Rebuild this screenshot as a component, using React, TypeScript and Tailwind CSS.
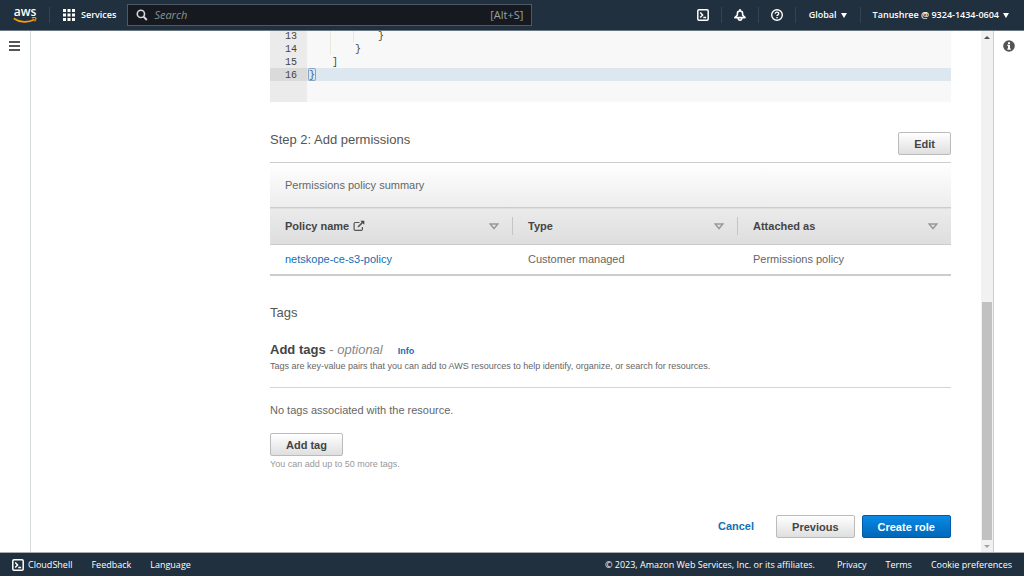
import type { ReactNode } from "react";

const codeLines = [
  { number: 13, text: "}", indent: 3, guides: 2 },
  { number: 14, text: "}", indent: 2, guides: 1 },
  { number: 15, text: "]", indent: 1, guides: 0 },
  { number: 16, text: "}", indent: 0, guides: 0, active: true },
];

const columns = [
  { title: "Policy name", width: "w-[243px]", external: true },
  { title: "Type", width: "w-[225px]" },
  { title: "Attached as", width: "w-auto" },
];

const CloudShellIcon = () => (
  <svg viewBox="0 0 12 12" className="size-3 shrink-0" fill="none" stroke="currentColor">
    <rect x="0.8" y="0.8" width="10.4" height="10.4" rx="1.2" strokeWidth="1.5" />
    <path d="M3.2 3.5 5.6 6 3.2 8.5M6.3 8.6h2.8" strokeWidth="1.5" />
  </svg>
);

const BellIcon = () => (
  <svg viewBox="0 0 12 12" className="size-3" fill="none" stroke="currentColor" strokeWidth="1.6">
    <path d="M.9 8.6h10.200L8.600 6V4.400C8.600 2.900 7.500 2 6 2s-2.600.9-2.600 2.400V6L.9 8.600Z" strokeLinejoin="round" />
    <path d="M6 0v2M4.2 9c0 1.3.8 2.2 1.800 2.200s1.800-.9 1.800-2.200" />
  </svg>
);

const HelpIcon = () => (
  <svg viewBox="0 0 12 12" className="size-3" fill="none" stroke="currentColor">
    <circle cx="6" cy="6" r="5.3" strokeWidth="1.4" />
    <path d="M4.2 4.8c0-1 .8-1.6 1.8-1.6s1.8.6 1.8 1.5C7.8 5.8 6 5.9 6 7.1" strokeWidth="1.3" />
    <path d="M6 8v1.3" strokeWidth="1.4" />
  </svg>
);

const SearchIcon = () => (
  <svg viewBox="0 0 12 12" className="size-3 shrink-0 text-[#d5dbdb]" fill="none" stroke="currentColor" strokeWidth="1.6">
    <circle cx="4.9" cy="4.9" r="3.6" />
    <path d="m7.6 7.6 3.2 3.4" strokeWidth="2" />
  </svg>
);

const GridIcon = () => (
  <svg viewBox="0 0 12 12" className="size-3" fill="currentColor">
    {[0, 4.5, 9].map((y) =>
      [0, 4.5, 9].map((x) => <rect key={`${x}-${y}`} x={x} y={y} width="3" height="3" />)
    )}
  </svg>
);

const ExternalIcon = () => (
  <svg viewBox="0 0 12 12" className="size-3" fill="none" stroke="#555" strokeWidth="1.2">
    <path d="M6.5 2.5H2.3c-.7 0-1.2.5-1.2 1.2v5.500c0 .7.5 1.2 1.2 1.2h5.9c.7 0 1.2-.5 1.2-1.2V7" />
    <path d="m5 7 4.6-4.6" strokeWidth="1.6" />
    <path d="M7.3.8h4v4z" fill="#444" stroke="none" />
  </svg>
);

const SortIcon = () => (
  <svg viewBox="0 0 10 7" className="h-[7px] w-[10px]" fill="none" stroke="#999" strokeWidth="1.5">
    <path d="M1.2 1h7.6L5 5.6z" />
  </svg>
);

const Caret = () => (
  <svg viewBox="0 0 6 5" className="h-[5px] w-[6px]" fill="currentColor">
    <path d="M0 0h6L3 5z" />
  </svg>
);

const Divider = () => <div className="h-4 w-px bg-[#35434f]" />;

const Button = ({ primary, children }: { primary?: boolean; children: ReactNode }) => (
  <button
    type="button"
    className={`${
      primary
        ? "border-[#005ba6] from-[#0a8ae6] to-[#0067b8] text-white"
        : "border-[#bbb] from-white to-[#dfdfdf] text-[#444]"
    } h-[23px] cursor-pointer rounded-[2px] border bg-linear-to-b px-[15px] text-[11px] leading-4 font-bold`}
  >
    {children}
  </button>
);

const Header = () => (
  <header className="flex h-[31px] shrink-0 items-center border-b border-[#6b7780] bg-[#20303e] text-[9px] font-semibold text-white">
    <a href="#" aria-label="aws" className="ml-[13px] flex w-6 flex-col items-center">
      <span className="text-[12px] leading-[10px] font-semibold">aws</span>
      <svg viewBox="0 0 24 6" className="h-[6px] w-6" fill="none" stroke="#f90">
        <path d="M.8 1.5c6 4.2 14.400 4.400 20.700 1" strokeWidth="1.6" />
        <path d="M18.800 1c1.300-.6 3.300-.7 3.900-.2.400.5-.1 2.300-1.100 3.500" strokeWidth="1.1" />
      </svg>
    </a>
    <div className="ml-3">
      <Divider />
    </div>
    <button type="button" className="ml-[13px] flex cursor-pointer items-center gap-[6px]">
      <GridIcon />
      Services
    </button>
    <label className="ml-[11px] flex h-[22px] w-[405px] items-center gap-[6px] border border-[#4d5a63] bg-[#16191f] px-2 text-[#95a5a6]">
      <SearchIcon />
      <input
        type="search"
        aria-label="Search"
        placeholder="Search"
        className="min-w-0 flex-1 bg-transparent text-[11px] font-normal italic outline-none placeholder:text-[#879596]"
      />
      <span className="text-[11px] font-normal">[Alt+S]</span>
    </label>
    <div className="mr-[15px] ml-auto flex items-center gap-3">
      <button type="button" aria-label="CloudShell" className="cursor-pointer">
        <CloudShellIcon />
      </button>
      <Divider />
      <button type="button" aria-label="Notifications" className="cursor-pointer">
        <BellIcon />
      </button>
      <Divider />
      <button type="button" aria-label="Help" className="cursor-pointer">
        <HelpIcon />
      </button>
      <Divider />
      <button type="button" className="flex cursor-pointer items-center gap-1 px-px">
        Global
        <Caret />
      </button>
      <Divider />
      <button type="button" className="flex cursor-pointer items-center gap-1">
        Tanushree @ 9324-1434-0604
        <Caret />
      </button>
    </div>
  </header>
);

const CodeEditor = () => (
  <div className="flex h-[71px] flex-col justify-end overflow-hidden bg-[#f8f8f8] font-['Liberation_Mono',monospace] text-[10px] leading-[15px] text-[#444]">
    {codeLines.map((line) => (
      <div key={line.number} className={`${line.active ? "bg-[#dce7f0]" : ""} flex h-[13px] shrink-0`}>
        <span className={`${line.active ? "bg-[#dadada]" : "bg-[#ebebeb]"} w-[37px] pr-[10px] text-right`}>
          {line.number}
        </span>
        <span className="flex pl-px">
          {Array.from({ length: line.indent }, (_, level) => (
            <span
              key={level}
              className={`${level < line.guides ? "border-r border-[#e8e8e0]" : ""} w-[23px]`}
            />
          ))}
          <span className={`${line.active ? "rounded-[2px] text-[#2a62a5] ring-1 ring-[#8ba3c0] ring-inset" : ""} w-2 text-center`}>
            {line.text}
          </span>
        </span>
      </div>
    ))}
    <div className="h-[21px] w-[37px] shrink-0 bg-[#ebebeb]" />
  </div>
);

const PolicyTable = () => (
  <section className="mt-[7px] border-t border-[#ccc]">
    <h3 className="flex h-11 items-center bg-linear-to-b from-white to-[#ededed] px-[15px] text-[11px]">
      Permissions policy summary
    </h3>
    <table className="w-full table-fixed border-collapse text-left text-[11px]">
      <thead>
        <tr className="h-[37px] border-y border-[#ccc] bg-linear-to-b from-[#ebebeb] to-[#dedede] text-[#444]">
          {columns.map((column, index) => (
            <th key={column.title} scope="col" className={`${column.width} p-0`}>
              <div
                className={`${
                  index < columns.length - 1 ? "border-r border-[#c5c5c5]" : ""
                } flex h-[18px] items-center justify-between pr-[13px] pl-[15px]`}
              >
                <span className="flex items-center gap-1">
                  {column.title}
                  {column.external && <ExternalIcon />}
                </span>
                <SortIcon />
              </div>
            </th>
          ))}
        </tr>
      </thead>
      <tbody>
        <tr className="h-[30px] border-b-2 border-[#ccc]">
          <td className="px-[15px]">
            <a href="#" className="text-[#146eb4]">
              netskope-ce-s3-policy
            </a>
          </td>
          <td className="px-[15px]">Customer managed</td>
          <td className="px-[15px]">Permissions policy</td>
        </tr>
      </tbody>
    </table>
  </section>
);

const ScrollTrack = () => (
  <div className="flex w-3 shrink-0 flex-col items-center bg-[#f1f1f1]">
    <div className="flex h-[13px] items-center">
      <svg viewBox="0 0 6 3" className="h-[3px] w-[6px]" fill="#505050">
        <path d="M0 3h6L3 0z" />
      </svg>
    </div>
    <div className="flex w-[10px] flex-1 flex-col justify-end">
      <div className="h-[48%] bg-[#c1c1c1]" />
    </div>
    <div className="flex h-3 items-center">
      <svg viewBox="0 0 6 3" className="h-[3px] w-[6px]" fill="#a3a3a3">
        <path d="M0 0h6L3 3z" />
      </svg>
    </div>
  </div>
);

const Footer = () => (
  <footer className="flex h-6 shrink-0 items-center gap-[19px] border-t border-[#a5adb3] bg-[#20303e] px-3 text-[9px] font-medium text-white">
    <a href="#" className="flex items-center gap-1">
      <CloudShellIcon />
      CloudShell
    </a>
    <a href="#">Feedback</a>
    <a href="#">Language</a>
    <span className="mr-[3px] ml-auto">© 2023, Amazon Web Services, Inc. or its affiliates.</span>
    <a href="#">Privacy</a>
    <a href="#">Terms</a>
    <a href="#">Cookie preferences</a>
  </footer>
);

const App = () => {
  return (
    <div className="flex h-screen flex-col overflow-hidden bg-white font-['Open_Sans',sans-serif]">
      <Header />
      <div className="flex min-h-0 flex-1">
        <nav className="flex w-[31px] shrink-0 justify-center border-r border-[#d5dbdb]">
          <button type="button" aria-label="Open menu" className="mt-[10px] h-[10px] cursor-pointer">
            <svg viewBox="0 0 12 10" className="h-[10px] w-3" fill="#545454">
              <path d="M0 0h11v2H0zM0 4h11v2H0zM0 8h11v2H0z" />
            </svg>
          </button>
        </nav>

        <main className="min-w-0 flex-1 overflow-hidden pr-[30px] pl-[239px] font-['Liberation_Sans',sans-serif] text-[#666]">
          <CodeEditor />

          <div className="mt-[30px] flex items-start justify-between">
            <h2 className="text-[13px] leading-4 text-[#555]">Step 2: Add permissions</h2>
            <Button>Edit</Button>
          </div>
          <PolicyTable />

          <h2 className="mt-[29px] text-[13px] leading-4 text-[#555]">Tags</h2>
          <div className="mt-[21px] flex items-baseline text-[13px] leading-4">
            <h3 className="font-bold text-[#444]">
              Add tags <span className="font-normal text-[#888]">- <i>optional</i></span>
            </h3>
            <a href="#" className="ml-[15px] text-[9px] font-bold text-[#146eb4]">
              Info
            </a>
          </div>
          <p className="border-b border-[#d5d5d5] pt-px pb-[15px] text-[9px] leading-3">
            Tags are key-value pairs that you can add to AWS resources to help identify, organize, or search for
            resources.
          </p>
          <p className="my-[14px] text-[11px] leading-4">No tags associated with the resource.</p>
          <Button>Add tag</Button>
          <p className="mt-[2px] text-[9px] leading-3 text-[#999]">You can add up to 50 more tags.</p>

          <div className="mt-[45px] flex items-center justify-end gap-[7px]">
            <a href="#" className="mr-[15px] text-[11px] font-bold text-[#146eb4]">
              Cancel
            </a>
            <Button>Previous</Button>
            <Button primary>Create role</Button>
          </div>
        </main>

        <ScrollTrack />
        <aside className="flex w-[31px] shrink-0 justify-center border-l border-[#ccc]">
          <button type="button" aria-label="Info panel" className="mt-[9px] h-3 cursor-pointer">
            <svg viewBox="0 0 12 12" className="size-3">
              <circle cx="6" cy="6" r="5.8" fill="#545454" />
              <path d="M5 2.2h2v1.700H5zM4.300 4.800H7v3.700h.8v1.200H4.300V8.500H5V6h-.7z" fill="#fff" />
            </svg>
          </button>
        </aside>
      </div>
      <Footer />
    </div>
  );
};

export default App;
